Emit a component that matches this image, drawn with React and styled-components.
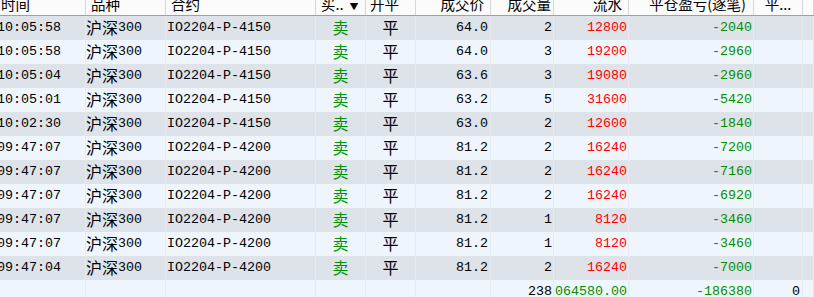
import styled, { createGlobalStyle } from 'styled-components';

const GlobalStyle = createGlobalStyle`
  html, body {
    margin: 0;
    padding: 0;
    background: #eff5fc;
    overflow: hidden;
  }
`

const COLS = '90px 80px 150px 50px 50px 75px 63px 75px 125px 49px 1fr';

const Table = styled.div`
  margin-left: -4px;
  width: calc(100% + 4px);
  height: 297px;
  overflow: hidden;
  font-family: "Liberation Mono", "Noto Sans CJK SC", monospace;
  font-size: 13.33px;
  color: #000;
`
const HeaderRow = styled.div`
  display: grid;
  grid-template-columns: ${COLS};
  height: 15px;
  background: #fbfbfb;
  border-bottom: 1px solid #a0a0a0;
`
const HeadCell = styled.div`
  display: flex;
  align-items: flex-start;
  justify-content: ${p => p.$align === 'right' ? 'flex-end' : p.$align === 'center' ? 'center' : 'flex-start'};
  padding: 0 ${p => p.$pr ?? 5}px 0 ${p => p.$pl ?? 5}px;
  border-right: 1px solid #d6d6d6;
  overflow: hidden;
  white-space: nowrap;
  font-family: "Noto Sans CJK SC", sans-serif;
  font-size: 14.5px;
  line-height: 16px;
  & > span {
    margin-top: -4px;
  }
`
const SortMark = styled.span`
  margin-left: 6px;
  margin-top: 1px !important;
  font-size: 9px;
  line-height: 12px;
`
const Row = styled.div`
  display: grid;
  grid-template-columns: ${COLS};
  height: 24px;
  background: ${p => p.$alt ? '#eff5fc' : '#dee3ea'};
`
const Cell = styled.div`
  display: flex;
  align-items: center;
  justify-content: ${p => p.$align === 'right' ? 'flex-end' : p.$align === 'center' ? 'center' : 'flex-start'};
  padding: 0 ${p => p.$pr ?? 2}px 2px ${p => p.$pl ?? 1}px;
  border-right: 1px solid #e7ebf0;
  overflow: hidden;
  white-space: nowrap;
  color: ${p => p.$color || '#000'};
`
const Cn = styled.span`
  font-family: "Noto Sans CJK SC", sans-serif;
  font-size: 16px;
  line-height: 18px;
  margin-top: -1px;
`

const GREEN = '#009000';
const RED = '#ff0000';

const rows = [
  ['10:05:58', '4150', '64.0', 2, 12800, -2040],
  ['10:05:58', '4150', '64.0', 3, 19200, -2960],
  ['10:05:04', '4150', '63.6', 3, 19080, -2960],
  ['10:05:01', '4150', '63.2', 5, 31600, -5420],
  ['10:02:30', '4150', '63.0', 2, 12600, -1840],
  ['09:47:07', '4200', '81.2', 2, 16240, -7200],
  ['09:47:07', '4200', '81.2', 2, 16240, -7160],
  ['09:47:07', '4200', '81.2', 2, 16240, -6920],
  ['09:47:07', '4200', '81.2', 1, 8120, -3460],
  ['09:47:07', '4200', '81.2', 1, 8120, -3460],
  ['09:47:04', '4200', '81.2', 2, 16240, -7000],
];

const App = () => {
  return (
    <>
      <GlobalStyle />
      <Table>
        <HeaderRow>
          <HeadCell $pl={5}><span>时间</span></HeadCell>
          <HeadCell><span>品种</span></HeadCell>
          <HeadCell><span>合约</span></HeadCell>
          <HeadCell>
            <span>买..</span>
            <SortMark>▼</SortMark>
          </HeadCell>
          <HeadCell $pl={4}><span>开平</span></HeadCell>
          <HeadCell $align="right" $pr={6}><span>成交价</span></HeadCell>
          <HeadCell $align="right" $pr={2}><span>成交量</span></HeadCell>
          <HeadCell $align="right" $pr={6}><span>流水</span></HeadCell>
          <HeadCell $align="right" $pr={7}><span>平仓盈亏(逐笔)</span></HeadCell>
          <HeadCell $align="center"><span>平...</span></HeadCell>
          <HeadCell />
        </HeaderRow>

        {rows.map((r, i) => (
          <Row key={i} $alt={i % 2 === 1}>
            <Cell>{r[0]}</Cell>
            <Cell $pl={0}><Cn>沪深</Cn>300</Cell>
            <Cell>IO2204-P-{r[1]}</Cell>
            <Cell $align="center" $pl={0} $pr={0} $color={GREEN}><Cn>卖</Cn></Cell>
            <Cell $align="center" $pl={0} $pr={0}><Cn>平</Cn></Cell>
            <Cell $align="right">{r[2]}</Cell>
            <Cell $align="right" $pr={1}>{r[3]}</Cell>
            <Cell $align="right" $pr={1} $color={RED}>{r[4]}</Cell>
            <Cell $align="right" $pr={1} $color={GREEN}>{r[5]}</Cell>
            <Cell />
            <Cell />
          </Row>
        ))}

        <Row $alt>
          <Cell />
          <Cell />
          <Cell />
          <Cell />
          <Cell />
          <Cell />
          <Cell $align="right" $pr={1}>238</Cell>
          <Cell $align="right" $pl={1} $pr={1} $color={GREEN}>064580.00</Cell>
          <Cell $align="right" $pr={1} $color={GREEN}>-186380</Cell>
          <Cell $align="right" $pr={2}>0</Cell>
          <Cell />
        </Row>
      </Table>
    </>
  )
}

export default App
